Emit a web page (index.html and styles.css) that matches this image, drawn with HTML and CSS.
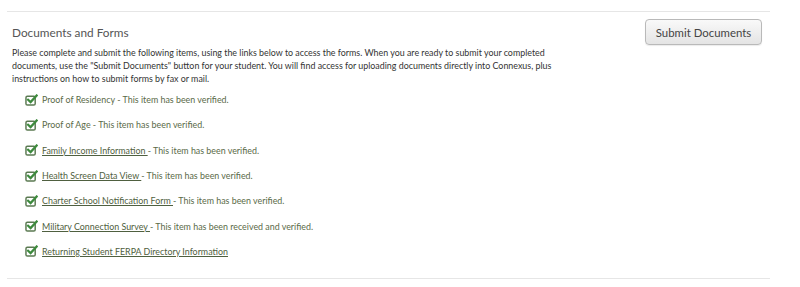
FILE: index.html
```html
<!DOCTYPE html>
<html lang="en">
<head>
<meta charset="utf-8">
<title>Documents and Forms</title>
<link rel="stylesheet" href="styles.css">
</head>
<body>
<section class="panel">
  <div class="head">
    <div class="intro">
      <h2 class="title">Documents and Forms</h2>
      <p class="desc">Please complete and submit the following items, using the links below to access the forms. When you are ready to submit your completed<br>documents, use the "Submit Documents" button for your student. You will find access for uploading documents directly into Connexus, plus<br>instructions on how to submit forms by fax or mail.</p>
    </div>
    <button class="submit" type="button">Submit Documents</button>
  </div>
  <ul class="items">
    <li class="item"><svg class="chk" viewBox="0 0 14 13"><rect x="1" y="2.5" width="10" height="9.5" rx="1.5" fill="none" stroke="#5b7a52" stroke-width="1.6"/><path d="M3.3 6.2 L6 8.8 L12.6 1.6" fill="none" stroke="#3d8a3d" stroke-width="2.4" stroke-linecap="square"/></svg><span class="name">Proof of Residency</span><span class="status"> - This item has been verified.</span></li>
    <li class="item"><svg class="chk" viewBox="0 0 14 13"><rect x="1" y="2.5" width="10" height="9.5" rx="1.5" fill="none" stroke="#5b7a52" stroke-width="1.6"/><path d="M3.3 6.2 L6 8.8 L12.6 1.6" fill="none" stroke="#3d8a3d" stroke-width="2.4" stroke-linecap="square"/></svg><span class="name">Proof of Age</span><span class="status"> - This item has been verified.</span></li>
    <li class="item"><svg class="chk" viewBox="0 0 14 13"><rect x="1" y="2.5" width="10" height="9.5" rx="1.5" fill="none" stroke="#5b7a52" stroke-width="1.6"/><path d="M3.3 6.2 L6 8.8 L12.6 1.6" fill="none" stroke="#3d8a3d" stroke-width="2.4" stroke-linecap="square"/></svg><a class="link" href="#">Family Income Information </a><span class="status">- This item has been verified.</span></li>
    <li class="item"><svg class="chk" viewBox="0 0 14 13"><rect x="1" y="2.5" width="10" height="9.5" rx="1.5" fill="none" stroke="#5b7a52" stroke-width="1.6"/><path d="M3.3 6.2 L6 8.8 L12.6 1.6" fill="none" stroke="#3d8a3d" stroke-width="2.4" stroke-linecap="square"/></svg><a class="link" href="#">Health Screen Data View </a><span class="status">- This item has been verified.</span></li>
    <li class="item"><svg class="chk" viewBox="0 0 14 13"><rect x="1" y="2.5" width="10" height="9.5" rx="1.5" fill="none" stroke="#5b7a52" stroke-width="1.6"/><path d="M3.3 6.2 L6 8.8 L12.6 1.6" fill="none" stroke="#3d8a3d" stroke-width="2.4" stroke-linecap="square"/></svg><a class="link" href="#">Charter School Notification Form </a><span class="status">- This item has been verified.</span></li>
    <li class="item"><svg class="chk" viewBox="0 0 14 13"><rect x="1" y="2.5" width="10" height="9.5" rx="1.5" fill="none" stroke="#5b7a52" stroke-width="1.6"/><path d="M3.3 6.2 L6 8.8 L12.6 1.6" fill="none" stroke="#3d8a3d" stroke-width="2.4" stroke-linecap="square"/></svg><a class="link" href="#">Military Connection Survey </a><span class="status">- This item has been received and verified.</span></li>
    <li class="item"><svg class="chk" viewBox="0 0 14 13"><rect x="1" y="2.5" width="10" height="9.5" rx="1.5" fill="none" stroke="#5b7a52" stroke-width="1.6"/><path d="M3.3 6.2 L6 8.8 L12.6 1.6" fill="none" stroke="#3d8a3d" stroke-width="2.4" stroke-linecap="square"/></svg><a class="link" href="#">Returning Student FERPA Directory Information</a></li>
  </ul>
</section>
</body>
</html>
```

FILE: styles.css
```css
html, body {
  margin: 0;
  padding: 0;
  background: #fff;
}
body {
  font-family: "Lato", "Open Sans", sans-serif;
  color: #333;
}
.panel {
  width: 763px;
  margin: 11px 0 0 7px;
  border-top: 1px solid #e6e6e6;
  border-bottom: 1px solid #e6e6e6;
  padding: 0 8px 14px 5px;
  box-sizing: border-box;
}
.head {
  display: flex;
  justify-content: space-between;
  align-items: flex-start;
}
.title {
  margin: 13px 0 0 0;
  font-size: 11.8px;
  font-weight: normal;
  color: #555;
  line-height: 16px;
}
.desc {
  margin: 5px 0 0 0;
  font-size: 8.9px;
  line-height: 13px;
  color: #333;
  white-space: nowrap;
}
.submit {
  margin-top: 7px;
  width: 117px;
  height: 26px;
  font-family: inherit;
  font-size: 11.4px;
  color: #444;
  background: linear-gradient(#f9f9f9, #e4e4e4);
  border: 1px solid #b9b9b9;
  border-radius: 4px;
  box-shadow: 0 1px 1px rgba(0,0,0,0.08);
  padding: 0;
}
.items {
  list-style: none;
  margin: 2px 0 0 0;
  padding: 0 0 0 13px;
}
.item {
  display: flex;
  align-items: center;
  height: 25.3px;
  font-size: 8.9px;
  color: #5a6a48;
}
.chk {
  width: 13px;
  height: 12px;
  margin-right: 4px;
  flex: none;
}
.name {
  color: #5a6a48;
}
.link {
  color: #4f6040;
  text-decoration: underline;
  white-space: pre;
}
.status {
  white-space: pre;
}
```
